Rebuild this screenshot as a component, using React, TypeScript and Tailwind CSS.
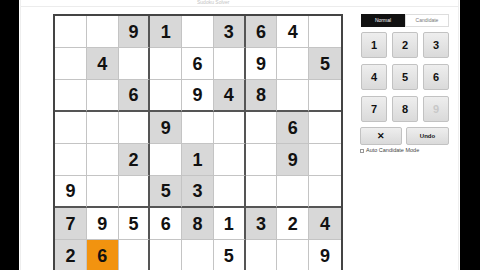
import React from "react";

// 0 = empty, g = given (shaded), w = entered (white), o = selected (orange)
type Cell = { v: number; k: "g" | "w" | "o" | "e" };

const ROWS: string[] = [
  "..,..,9g,1g,..,3g,6g,4w,..",
  "..,4g,..,..,6w,..,9w,..,5g",
  "..,..,6g,..,9w,4g,8g,..,..",
  "..,..,..,9g,..,..,..,6g,..",
  "..,..,2g,..,1g,..,..,9g,..",
  "9w,..,..,5g,3g,..,..,..,..",
  "7g,9w,5w,6w,8g,1w,3g,2w,4g",
  "2g,6o,..,..,..,5w,..,..,9w",
  "..,..,..,..,..,..,..,..,..",
];

const BOARD: Cell[][] = ROWS.map((r) =>
  r.split(",").map((s) =>
    s === ".." ? { v: 0, k: "e" } : { v: Number(s[0]), k: s[1] as Cell["k"] }
  )
);

const cellClass = (r: number, c: number, k: Cell["k"]) => {
  const right =
    c === 8 ? "" : c === 2 || c === 5 ? "border-r-2 border-r-[#555]" : "border-r border-r-[#c4c4c4]";
  const bottom =
    r === 8 ? "" : r === 2 || r === 5 ? "border-b-2 border-b-[#555]" : "border-b border-b-[#c4c4c4]";
  const bg = k === "g" ? "bg-[#d8d8d8]" : k === "o" ? "bg-[#f2930f]" : "bg-white";
  return `h-[32px] flex items-center justify-center ${right} ${bottom} ${bg}`;
};

const KeyBtn = ({ label, disabled }: { label: string; disabled?: boolean }) => (
  <button
    className={`w-[26px] h-[26px] rounded-[2px] border border-[#c2c2c2] bg-gradient-to-b from-[#eeeeee] to-[#dadada] text-[11px] font-bold leading-none ${
      disabled ? "text-[#c8c8c8]" : "text-[#111]"
    }`}
  >
    {label}
  </button>
);

export default function App() {
  return (
    <div
      className="flex w-[480px] h-[270px] overflow-hidden bg-black"
      style={{ fontFamily: '"Liberation Sans", Arial, sans-serif' }}
    >
      <div className="w-[19px] shrink-0 bg-black" />
      <div className="w-[441px] shrink-0 bg-white px-[1px]">
        <div className="h-full border-x border-[#eeeeee]">
          {/* header strip */}
          <div className="h-[7px] border-b border-[#ececec] pl-[176px] flex items-start">
            <div className="text-[5px] leading-[5px] text-[#c4c4c4]">Sudoku Solver</div>
          </div>

          <div className="flex pl-[32px] pt-[7px]">
            {/* board */}
            <div className="w-[290px] shrink-0 border-2 border-[#444] grid grid-cols-9">
              {BOARD.map((row, r) =>
                row.map((cell, c) => (
                  <div key={`${r}-${c}`} className={cellClass(r, c, cell.k)}>
                    {cell.v > 0 && (
                      <span className="text-[18px] font-bold leading-none text-[#111]">{cell.v}</span>
                    )}
                  </div>
                ))
              )}
            </div>

            {/* controls */}
            <div className="ml-[18px] w-[88px] flex flex-col">
              <div className="flex h-[13px]">
                <div className="w-[44px] bg-[#111] text-white text-[5px] flex items-center justify-center">
                  Normal
                </div>
                <div className="w-[44px] border border-[#dddddd] text-[#777] text-[5px] flex items-center justify-center">
                  Candidate
                </div>
              </div>

              <div className="mt-[5px] grid grid-cols-3 gap-x-[5px] gap-y-[6px] w-[88px]">
                {["1", "2", "3", "4", "5", "6", "7", "8"].map((n) => (
                  <KeyBtn key={n} label={n} />
                ))}
                <KeyBtn label="9" disabled />
              </div>

              <div className="mt-[5px] flex gap-[4px] -ml-[1px]">
                <button className="w-[42px] h-[18px] rounded-[2px] border border-[#c2c2c2] bg-gradient-to-b from-[#eeeeee] to-[#dadada] text-[9px] font-bold text-[#111] leading-none">
                  ✕
                </button>
                <button className="w-[43px] h-[18px] rounded-[2px] border border-[#c2c2c2] bg-gradient-to-b from-[#eeeeee] to-[#dadada] text-[6px] font-bold text-[#111] leading-none">
                  Undo
                </button>
              </div>

              <label className="mt-[3px] -ml-[1px] flex items-center gap-[2px] text-[5.5px] text-[#444] leading-none">
                <span className="w-[4px] h-[4px] border border-[#999] bg-white inline-block" />
                Auto Candidate Mode
              </label>
            </div>
          </div>
        </div>
      </div>
      <div className="flex-1 bg-black" />
    </div>
  );
}
